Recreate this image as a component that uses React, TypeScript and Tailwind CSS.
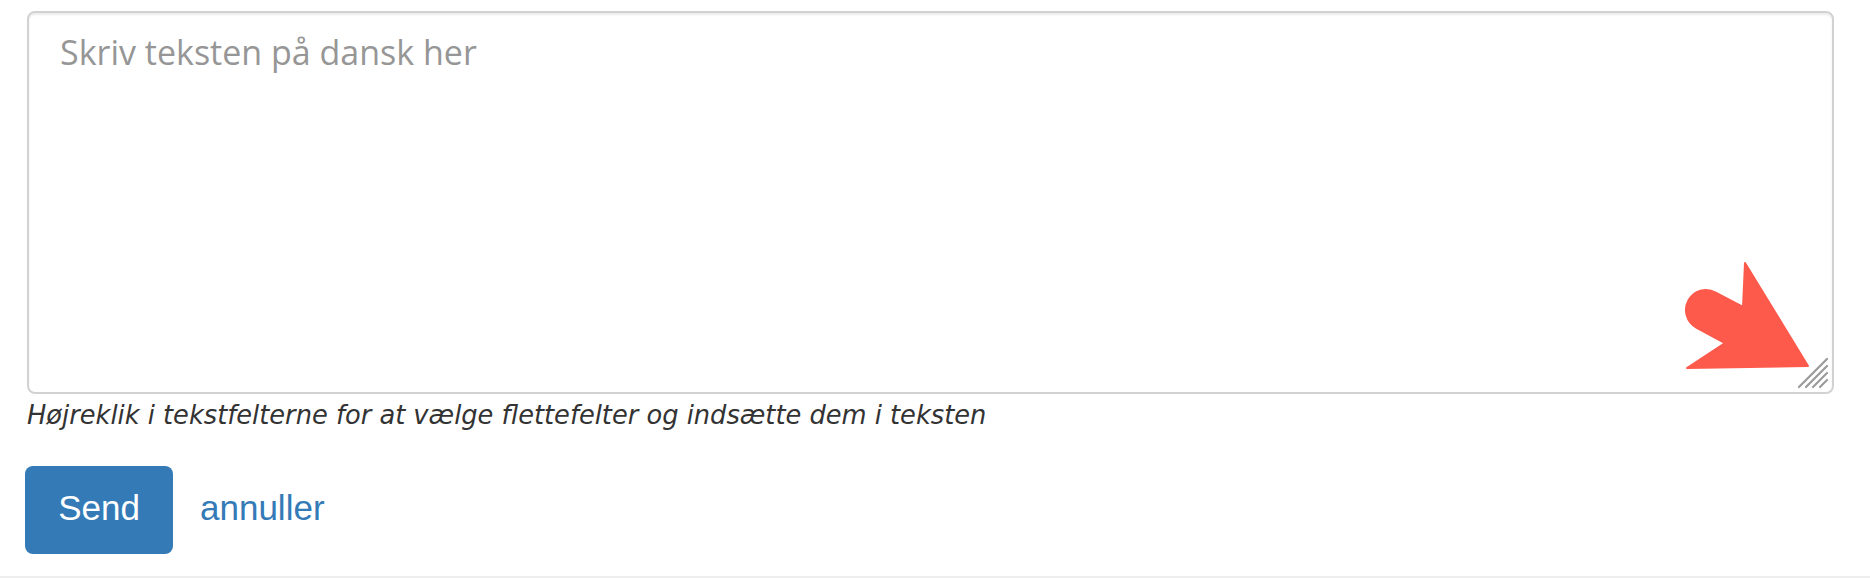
import { useState } from "react";

function ResizeGrip() {
  return (
    <svg
      className="absolute right-[4px] bottom-[4px] pointer-events-none"
      width="34"
      height="34"
      viewBox="0 0 34 34"
    >
      <g stroke="#9a9a9a" strokeWidth="2.2" strokeLinecap="round">
        <line x1="3" y1="31" x2="31" y2="3" />
        <line x1="10" y1="31" x2="31" y2="10" />
        <line x1="17" y1="31" x2="31" y2="17" />
        <line x1="24" y1="31" x2="31" y2="24" />
      </g>
    </svg>
  );
}

function PointerArrow() {
  // red annotation arrow pointing at the resize grip
  return (
    <svg
      className="absolute left-[1653px] top-[247px] pointer-events-none"
      width="135"
      height="115"
      viewBox="1680 258 135 115"
    >
      <path
        d="M1745 263 L1808 366 L1687 368 L1725 343 L1696.3 327.5 A20 20 0 0 1 1715.7 292.5 L1743 307 Z"
        fill="#fd5a4c"
        stroke="#fd5a4c"
        strokeWidth="2"
        strokeLinejoin="round"
      />
    </svg>
  );
}

export default function App() {
  const [text, setText] = useState("");

  return (
    <div className="w-[1870px] h-[578px] bg-white border-b-2 border-[#eeeeee] overflow-hidden">
      <div className="pl-[27px] pr-[36px] pt-[11px]">
        <div className="relative">
          <textarea
            value={text}
            onChange={e => setText(e.target.value)}
            placeholder="Skriv teksten på dansk her"
            className="block w-full h-[383px] resize-none rounded-[8px] border-2 border-[#d2d2d2] bg-white px-[31px] pt-[15px] text-[34px] font-medium leading-[48px] text-[#333] placeholder:text-[#969696] shadow-[inset_0_2px_2px_rgba(0,0,0,0.075)] outline-none font-['Open_Sans',sans-serif]"
          />
          <ResizeGrip />
          <PointerArrow />
        </div>

        <p className="mt-[3px] text-[25.7px] leading-[36px] italic text-[#333] font-['DejaVu_Sans',sans-serif]">
          Højreklik i tekstfelterne for at vælge flettefelter og indsætte dem i teksten
        </p>

        <div className="mt-[33px] flex items-center gap-[27px] font-['Liberation_Sans',Arial,sans-serif]">
          <button className="w-[148px] h-[88px] -ml-[2px] rounded-[8px] bg-[#337ab7] text-white text-[35px] leading-none pb-[6px]">
            Send
          </button>
          <a href="#" className="text-[35px] leading-none pb-[6px] text-[#337ab7]">
            annuller
          </a>
        </div>
      </div>
    </div>
  );
}
